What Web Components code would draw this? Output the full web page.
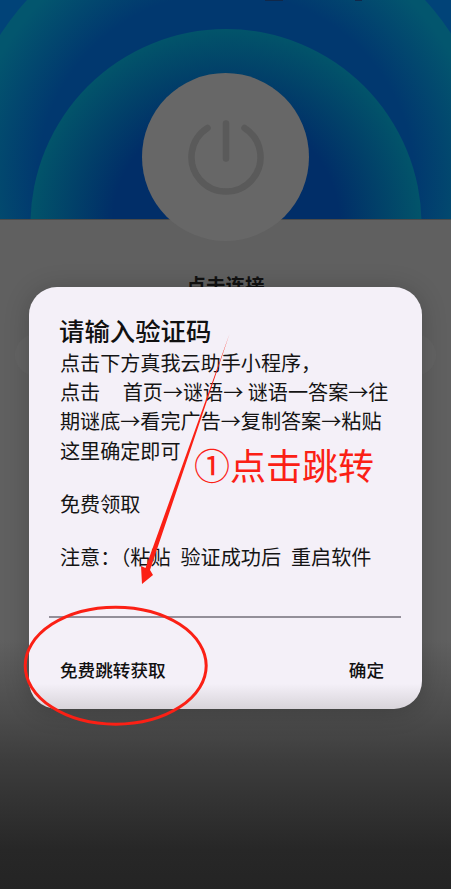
<!DOCTYPE html>
<html lang="zh">
<head>
<meta charset="utf-8">
<title>验证码</title>
<style>
  html, body { margin: 0; height: 100%; }
  body { font-family: "Noto Sans CJK SC", "Noto Sans", sans-serif; overflow: hidden; }
  .gap { height: 24px; }
  .note-line { word-spacing: .5px; }
</style>
</head>
<body>
<app-screen>
  <code-dialog>
    <span slot="title">请输入验证码</span>
    <p>点击下方真我云助手小程序，</p>
    <p>点击&nbsp;&nbsp;&nbsp;&nbsp;&nbsp;首页→谜语→&nbsp;谜语一答案→往</p>
    <p>期谜底→看完广告→复制答案→粘贴</p>
    <p>这里确定即可</p>
    <p class="gap"></p>
    <p>免费领取</p>
    <p class="gap"></p>
    <p class="note-line">注意：（粘贴&nbsp;&nbsp;验证成功后&nbsp;&nbsp;重启软件</p>
  </code-dialog>
</app-screen>

<script>
// fond : bandeau bleu + bouton, le tout assombri par le voile de la modale
class AppScreen extends HTMLElement {
  connectedCallback() {
    const root = this.attachShadow({ mode: 'open' });
    root.innerHTML = `
      <style>
        :host {
          display: block; position: relative; width: 451px; height: 889px; overflow: hidden;
          background: linear-gradient(#606060 0 640px, #4a4a4a 720px, #3d3d3d 760px, #272727 850px, #242424);
        }
        .hero {
          height: 220px; overflow: hidden; position: relative;
          background: #014378;
          border-bottom: 1px solid #4a4a4a; box-sizing: border-box;
        }
        .ring { position: absolute; border-radius: 50%; left: 50%; transform: translateX(-50%); }
        .r1 { width: 538px; height: 538px; top: -88px;
          background: radial-gradient(circle closest-side, #01386f 0 70%, #03566e 96%, #03566e 100%); }
        .r2 { width: 391px; height: 391px; top: 29px;
          background: radial-gradient(circle closest-side, #012e68 0 58%, #02546a 100%); }
        .clip { position: absolute; top: 0; height: 1px; background: #10284a; }
        .btn {
          position: absolute; left: 142px; top: 73px; width: 167px; height: 168px; border-radius: 50%;
          background: #676767; display: flex; align-items: center; justify-content: center;
        }
        .btn svg { width: 80px; height: 80px; }
        .label {
          position: absolute; top: 272px; left: 0; right: 0; text-align: center;
          font-size: 19.500px; font-weight: 700; color: #111; line-height: 26px;
        }
        .pill { position: absolute; left: 15px; right: 15px; top: 334px; height: 42px; border-radius: 21px; background: #636363; }
      </style>
      <div class="hero">
        <div class="ring r1"></div>
        <div class="ring r2"></div>
        <div class="clip" style="left:265px;width:18px"></div>
        <div class="clip" style="left:355px;width:7px"></div>
      </div>
      <div class="btn">
        <svg viewBox="0 0 80 80" fill="none" stroke="#5a5a5a" stroke-width="6.500" stroke-linecap="round">
          <path d="M40 6.500V41.500"/>
          <path d="M21.500 11A34.500 34.500 0 1 0 58.500 11"/>
        </svg>
      </div>
      <div class="label">点击连接</div>
      <div class="pill"></div>
      <slot></slot>
    `;
  }
}

class CodeDialog extends HTMLElement {
  connectedCallback() {
    const root = this.attachShadow({ mode: 'open' });
    root.innerHTML = `
      <style>
        :host {
          position: absolute; left: 29px; top: 287px; width: 393px; height: 422px; box-sizing: border-box;
          display: flex; flex-direction: column;
          padding: 27px 31px 0 30px; border-radius: 28px;
          background: linear-gradient(#f4f0f8 0 94%, #d8d4da 100%);
          box-shadow: 0 2px 26px #0003;
          color: #141414;
        }
        .title { font-size: 25.400px; line-height: 32px; font-weight: 500; color: #111; }
        .body { font-size: 20.100px; line-height: 29.200px; white-space: nowrap; margin: 2px 0 0 1px; }
        ::slotted(p) { margin: 0; }
        .field { margin: 40px -10px 0; border-bottom: 2px solid #938f99; height: 5px; flex: none; }
        .actions { display: flex; justify-content: space-between; margin: 40px 0 0 1px; padding-right: 7px;
          font-size: 17.600px; line-height: 24px; font-weight: 500; color: #111; }
        .marks { position: absolute; left: -29px; top: -287px; width: 451px; height: 889px; pointer-events: none; }
        .note { position: absolute; left: 165px; top: 155px; font-size: 36px; line-height: 44px; color: #fb2015; white-space: nowrap; }
      </style>
      <div class="title"><slot name="title"></slot></div>
      <div class="body"><slot></slot></div>
      <div class="field"></div>
      <div class="actions"><span>免费跳转获取</span><span>确定</span></div>
      <div class="note">①点击跳转</div>
      <svg class="marks" viewBox="0 0 451 889" fill="none">
        <ellipse cx="115.700" cy="665.700" rx="90.500" ry="58.500" stroke="#fb2015" stroke-width="3"/>
        <path d="M229.500 334L150 570L153 575L142 584L141 566L145.500 568Z" fill="#fb2015"/>
      </svg>
    `;
  }
}

customElements.define('app-screen', AppScreen);
customElements.define('code-dialog', CodeDialog);
</script>
</body>
</html>
